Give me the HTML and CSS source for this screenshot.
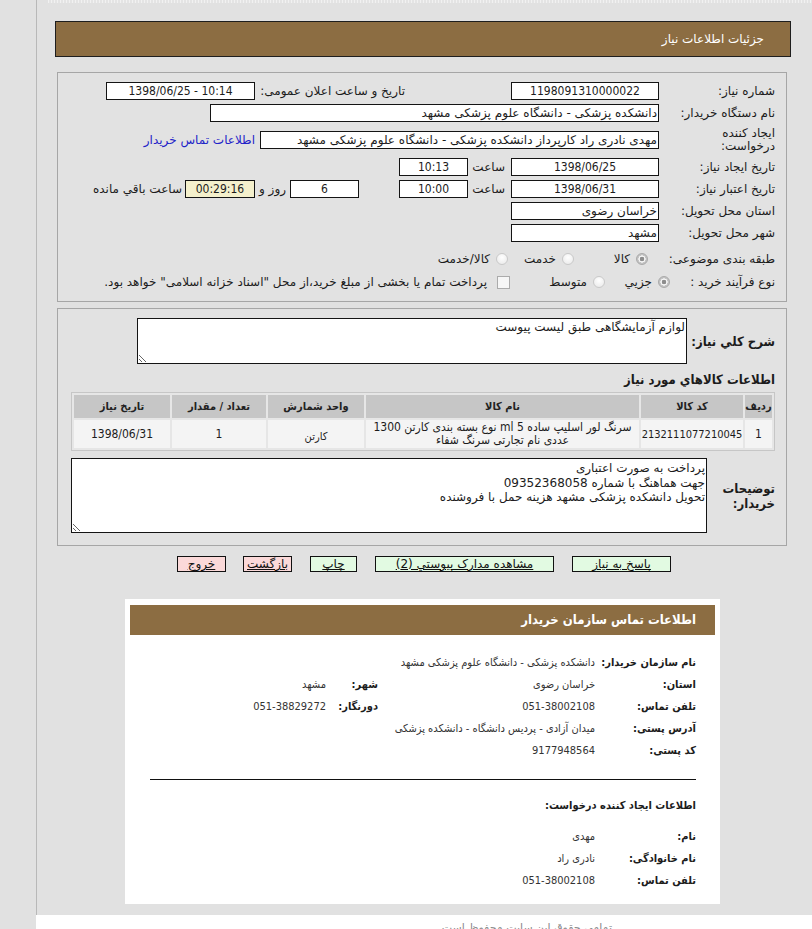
FILE: index.html
```html
<!DOCTYPE html>
<html lang="fa" dir="rtl">
<head>
<meta charset="utf-8">
<title>جزئيات اطلاعات نياز</title>
<link rel="stylesheet" href="styles.css">
</head>
<body>
<div class="page">
  <div class="top-edge"></div>
  <div class="title-bar">جزئيات اطلاعات نياز</div>

  <div class="panel main-panel">
    <div class="row">
      <div class="lbl">شماره نياز:</div>
      <div class="field w148 center num">1198091310000022</div>
      <div class="lbl2">تاريخ و ساعت اعلان عمومی:</div>
      <div class="field w149 center num f-after" dir="ltr">1398/06/25 - 10:14</div>
    </div>
    <div class="row">
      <div class="lbl">نام دستگاه خريدار:</div>
      <div class="field w449">دانشکده پزشکی - دانشگاه علوم پزشکی مشهد</div>
    </div>
    <div class="row row-tall">
      <div class="lbl lbl-two">ايجاد کننده<br>درخواست:</div>
      <div class="field w399">مهدی نادری راد کارپرداز دانشکده پزشکی - دانشگاه علوم پزشکی مشهد</div>
      <a class="contact-link" href="#">اطلاعات تماس خريدار</a>
    </div>
    <div class="row">
      <div class="lbl">تاريخ ايجاد نياز:</div>
      <div class="field w148 center num">1398/06/25</div>
      <div class="saat">ساعت</div>
      <div class="field w69 center num">10:13</div>
    </div>
    <div class="row">
      <div class="lbl">تاريخ اعتبار نياز:</div>
      <div class="field w148 center num">1398/06/31</div>
      <div class="saat">ساعت</div>
      <div class="field w69 center num">10:00</div>
      <div class="field w69 center num days">6</div>
      <div class="rooz">روز و</div>
      <div class="field w70 center num timer">00:29:16</div>
      <div class="remain">ساعت باقي مانده</div>
    </div>
    <div class="row">
      <div class="lbl">استان محل تحويل:</div>
      <div class="field w148">خراسان رضوی</div>
    </div>
    <div class="row">
      <div class="lbl">شهر محل تحويل:</div>
      <div class="field w148">مشهد</div>
    </div>
    <div class="row row-cat">
      <div class="lbl">طبقه بندی موضوعی:</div>
      <div class="opt opt-c1"><span class="radio checked"></span><span>کالا</span></div>
      <div class="opt opt-c2"><span class="radio"></span><span>خدمت</span></div>
      <div class="opt"><span class="radio"></span><span>کالا/خدمت</span></div>
    </div>
    <div class="row row-proc">
      <div class="lbl lbl-proc">نوع فرآيند خريد :</div>
      <div class="opt opt-p1"><span class="radio checked"></span><span>جزيي</span></div>
      <div class="opt opt-p2"><span class="radio"></span><span>متوسط</span></div>
      <div class="opt opt-chk"><span class="checkbox"></span><span>پرداخت تمام يا بخشی از مبلغ خريد،از محل "اسناد خزانه اسلامی" خواهد بود.</span></div>
    </div>
  </div>

  <div class="panel desc-panel">
    <div class="desc-row">
      <div class="blbl desc-lbl">شرح کلي نياز:</div>
      <textarea class="tarea tarea-desc" readonly>لوازم آزمايشگاهی طبق ليست پيوست</textarea>
    </div>
    <div class="sub-heading">اطلاعات کالاهاي مورد نياز</div>
    <table class="goods">
      <thead>
        <tr>
          <th class="c-idx">رديف</th>
          <th class="c-code">کد کالا</th>
          <th class="c-name">نام کالا</th>
          <th class="c-unit">واحد شمارش</th>
          <th class="c-qty">تعداد / مقدار</th>
          <th class="c-date">تاريخ نياز</th>
        </tr>
      </thead>
      <tbody>
        <tr>
          <td>1</td>
          <td class="code-cell">2132111077210045</td>
          <td class="name-cell">سرنگ لور اسليپ ساده 5 ml نوع بسته بندی کارتن 1300<br>عددی نام تجارتی سرنگ شفاء</td>
          <td class="small">کارتن</td>
          <td>1</td>
          <td>1398/06/31</td>
        </tr>
      </tbody>
    </table>
    <div class="notes-row">
      <div class="blbl notes-lbl">توضيحات<br>خريدار:</div>
      <textarea class="tarea tarea-notes" readonly>پرداخت به صورت اعتباری
جهت هماهنگ با شماره 09352368058
تحويل دانشکده پزشکی مشهد هزينه حمل با فروشنده</textarea>
    </div>
  </div>

  <div class="buttons">
    <a class="btn green b-reply" href="#">پاسخ به نياز</a>
    <a class="btn green b-docs" href="#">مشاهده مدارک پيوستي (2)</a>
    <a class="btn green b-print" href="#">چاپ</a>
    <a class="btn pink b-back" href="#">بازگشت</a>
    <a class="btn pink b-exit" href="#">خروج</a>
  </div>

  <div class="contact">
    <div class="contact-head">اطلاعات تماس سازمان خريدار</div>
    <div class="contact-body">
      <div class="c-row c-first">
        <div class="c-lbl">نام سازمان خريدار:</div>
        <div class="c-val">دانشکده پزشکی - دانشگاه علوم پزشکی مشهد</div>
      </div>
      <div class="c-row">
        <div class="c-lbl">استان:</div>
        <div class="c-val">خراسان رضوی</div>
        <div class="c-lbl2">شهر:</div>
        <div class="c-val2">مشهد</div>
      </div>
      <div class="c-row">
        <div class="c-lbl">تلفن تماس:</div>
        <div class="c-val"><span dir="ltr">051-38002108</span></div>
        <div class="c-lbl2">دورنگار:</div>
        <div class="c-val2"><span dir="ltr">051-38829272</span></div>
      </div>
      <div class="c-row">
        <div class="c-lbl">آدرس پستی:</div>
        <div class="c-val c-wide">ميدان آزادی - پرديس دانشگاه - دانشکده پزشکی</div>
      </div>
      <div class="c-row">
        <div class="c-lbl">کد پستی:</div>
        <div class="c-val">9177948564</div>
      </div>
      <div class="c-rule"></div>
      <div class="c-row c-title">اطلاعات ايجاد کننده درخواست:</div>
      <div class="c-row c-second">
        <div class="c-lbl">نام:</div>
        <div class="c-val">مهدی</div>
      </div>
      <div class="c-row">
        <div class="c-lbl">نام خانوادگی:</div>
        <div class="c-val">نادری راد</div>
      </div>
      <div class="c-row">
        <div class="c-lbl">تلفن تماس:</div>
        <div class="c-val"><span dir="ltr">051-38002108</span></div>
      </div>
    </div>
  </div>
</div>
<div class="footer">تمامی حقوق این سایت محفوظ است</div>
</body>
</html>
```

FILE: styles.css
```css
* { box-sizing: border-box; }
html, body { margin: 0; padding: 0; }
body {
  width: 812px;
  height: 929px;
  overflow: hidden;
  background: #e1e1e1;
  font-family: "DejaVu Sans", sans-serif;
  font-size: 12px;
  color: #1c1c1c;
}
.page {
  margin-left: 36px;
  border-left: 1px solid #b8b8b8;
  height: 915px;
  overflow: hidden;
}
.top-edge {
  height: 3px;
  margin-left: 11px;
  background: repeating-linear-gradient(90deg, #f1f1f1 0 1px, #e4e4e4 1px 3px);
}
.title-bar {
  width: 736px;
  height: 36px;
  margin: 18px 21px 0 0;
  background: #8c6d42;
  border: 1px solid #1e1e1e;
  color: #fff;
  font-size: 12px;
  line-height: 34px;
  padding-right: 26px;
}
.panel {
  width: 730px;
  margin-right: 25px;
  border: 1px solid #a6a6a6;
  background: #e2e2e2;
}
.main-panel {
  margin-top: 15px;
  height: 230px;
  padding: 7px 11px 0 0;
}
.row {
  display: flex;
  align-items: center;
  height: 22px;
  white-space: nowrap;
}
.row-tall { height: 32px; }
.row-cat { margin-top: 4px; }
.row-proc { margin-top: 1px; }
.lbl { width: 114px; flex: none; }
.lbl-two { line-height: 13px; }
.lbl-proc { width: 105px; }
.lbl2 { width: 149px; margin-right: 106px; flex: none; }
.field {
  flex: none;
  height: 18px;
  margin-right: 2px;
  background: #fff;
  border: 1px solid #141414;
  line-height: 16px;
  padding: 0 1px;
  overflow: hidden;
  white-space: nowrap;
}
.num { font-family: "DejaVu Sans Condensed", "DejaVu Sans", sans-serif; }
.f-after { margin-right: 1px; }
.center { text-align: center; }
.w148 { width: 148px; }
.w149 { width: 149px; }
.w449 { width: 449px; }
.w399 { width: 399px; }
.w69 { width: 69px; margin-right: 0; }
.w70 { width: 70px; margin-right: 0; }
.days { margin-right: 40px; }
.timer { background: #f4f0cc; }
.saat { width: 43px; padding-right: 6px; flex: none; }
.rooz { width: 35px; text-align: center; flex: none; }
.remain { margin-right: 3px; }
.contact-link {
  margin-right: 5px;
  color: #2323c8;
  text-decoration: none;
}
.opt { display: flex; align-items: center; gap: 6px; flex: none; }
.opt-c1 { margin-right: 13px; width: 74px; }
.opt-c2 { width: 66px; }
.opt-p1 { width: 65px; }
.opt-p2 { width: 95px; }
.opt-chk { gap: 10px; }
.radio {
  width: 12px;
  height: 12px;
  border-radius: 50%;
  border: 1px solid #c9c9c9;
  background: radial-gradient(circle at 50% 35%, #ffffff 0, #ececec 80%);
  flex: none;
}
.radio.checked {
  border-color: #a9a9a9;
  background: radial-gradient(circle, #8d8d8d 0 2px, #f7f7f7 2.6px 3.4px, #c4c4c4 3.8px 100%);
}
.checkbox {
  width: 13px;
  height: 13px;
  border: 1px solid #ababab;
  background: #f6f6f6;
  flex: none;
}

.desc-panel {
  margin-top: 6px;
  padding: 9px 11px 12px 0;
}
.desc-row { display: flex; align-items: center; }
.blbl {
  font-family: "DejaVu Sans Condensed", "DejaVu Sans", sans-serif;
  font-weight: bold;
  font-size: 13px;
  flex: none;
}
.desc-lbl { width: 88px; }
.tarea {
  display: block;
  flex: none;
  border: 1px solid #141414;
  background: #fff;
  font-family: "DejaVu Sans", sans-serif;
  font-size: 12px;
  color: #1c1c1c;
  padding: 1px 1px 0;
  margin: 0;
  overflow: hidden;
  outline: none;
}
.tarea-desc { width: 550px; height: 46px; }
.sub-heading {
  margin-top: 8px;
  height: 16px;
  line-height: 16px;
  font-family: "DejaVu Sans Condensed", "DejaVu Sans", sans-serif;
  font-weight: bold;
  font-size: 13px;
}
.goods {
  margin-top: 4px;
  width: 704px;
  border: 1px solid #c6c6c6;
  border-spacing: 2px;
  background: #e6e6e6;
  table-layout: fixed;
  font-family: "DejaVu Sans Condensed", "DejaVu Sans", sans-serif;
}
.goods th {
  background: #c6c6c6;
  height: 23px;
  font-size: 11px;
  font-weight: bold;
  color: #222;
  padding: 0;
}
.goods td {
  background: #f4f4f4;
  height: 28px;
  text-align: center;
  padding: 0 2px;
  font-size: 12px;
  line-height: 13px;
}
.goods td.code-cell { font-size: 11px; padding: 0; }
.goods td.small { font-size: 11px; padding-top: 4px; }
.c-idx { width: 27px; }
.c-code { width: 102px; }
.c-name { width: 273px; }
.c-unit { width: 96px; }
.c-qty { width: 94px; }
.c-date { width: 96px; }
.notes-row { display: flex; align-items: center; margin-top: 7px; }
.notes-lbl { width: 68px; line-height: 15px; }
.tarea-notes { width: 636px; height: 75px; line-height: 14.5px; padding-top: 2px; }

.buttons {
  display: flex;
  margin-top: 10px;
  padding-right: 141px;
  height: 16px;
}
.btn {
  display: block;
  height: 16px;
  border: 1px solid #111;
  color: #111;
  font-size: 12px;
  line-height: 14px;
  text-align: center;
  text-decoration: underline;
  white-space: nowrap;
  flex: none;
}
.green { background: #e2fae2; }
.pink { background: #fbd9d9; }
.b-reply { width: 99px; }
.b-docs { width: 179px; margin-right: 18px; }
.b-print { width: 47px; margin-right: 18px; }
.b-back { width: 49px; margin-right: 18px; }
.b-exit { width: 49px; margin-right: 17px; }

.contact {
  width: 595px;
  height: 305px;
  margin: 27px 92px 0 0;
  background: #fff;
  padding: 6px 5px 0;
  font-family: "DejaVu Sans Condensed", "DejaVu Sans", sans-serif;
}
.contact-head {
  height: 30px;
  background: #8c6d42;
  color: #fff;
  font-weight: bold;
  font-size: 13px;
  line-height: 30px;
  padding-right: 19px;
}
.contact-body { padding-right: 19px; }
.c-row {
  display: flex;
  align-items: center;
  height: 22px;
  white-space: nowrap;
}
.c-first { margin-top: 16px; }
.c-lbl { width: 101px; font-weight: bold; font-size: 11px; flex: none; }
.c-val { width: 217px; font-size: 11px; color: #333; flex: none; }
.c-wide { width: auto; }
.c-lbl2 { width: 52px; font-weight: bold; font-size: 11px; flex: none; }
.c-val2 { font-size: 11px; color: #333; }
.c-rule {
  height: 1px;
  background: #111;
  margin: 18px 0 0 20px;
}
.c-title { margin-top: 14px; font-weight: bold; font-size: 11px; }
.c-second { margin-top: 9px; }

.footer {
  margin-left: 36px;
  height: 14px;
  background: #fff;
  padding: 6px 200px 0 0;
  font-size: 11px;
  color: #8c8c8c;
}
```
